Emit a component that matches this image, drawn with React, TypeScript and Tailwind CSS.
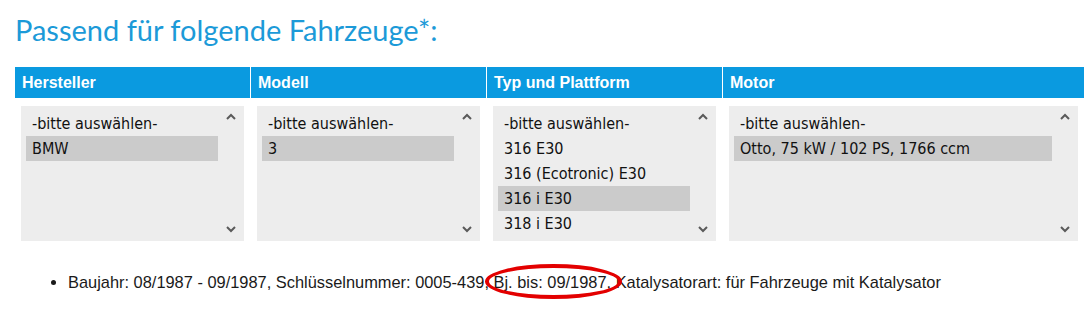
const columns = [
  {
    title: 'Hersteller',
    options: ['-bitte auswählen-', 'BMW'],
    selected: 1,
  },
  {
    title: 'Modell',
    options: ['-bitte auswählen-', '3'],
    selected: 1,
  },
  {
    title: 'Typ und Plattform',
    options: ['-bitte auswählen-', '316 E30', '316 (Ecotronic) E30', '316 i E30', '318 i E30'],
    selected: 3,
  },
  {
    title: 'Motor',
    options: ['-bitte auswählen-', 'Otto, 75 kW / 102 PS, 1766 ccm'],
    selected: 1,
  },
]

function Chevron({ up }: { up?: boolean }) {
  return (
    <svg width="10" height="7" viewBox="0 0 10 7" className="block">
      <path
        d={up ? 'M1 6 L5 2 L9 6' : 'M1 1 L5 5 L9 1'}
        fill="none"
        stroke="#5a5a5a"
        strokeWidth="2"
      />
    </svg>
  )
}

export default function App() {
  return (
    <div className="min-h-[315px] bg-white px-[15px] pt-[10px]">
      <h2 className="font-['Lato',sans-serif] text-[29px] leading-[40px] text-[#1c9ad8]">
        Passend für folgende Fahrzeuge*:
      </h2>

      <div className="mt-[17px] grid grid-cols-[235px_235px_235px_361px] gap-x-px">
        {columns.map((c) => (
          <div
            key={c.title}
            className="flex h-[31px] items-center bg-[#0a9ae0] pl-[7px] font-['Liberation_Sans',sans-serif] text-[16px] font-bold text-white"
          >
            {c.title}
          </div>
        ))}
        {columns.map((c) => (
          <div key={c.title} className="px-[6px] pt-[8px]">
            <div className="flex h-[135px] bg-[#ededed] py-[5px] pl-[5px]">
              <div className="flex-1 font-['DejaVu_Sans_Condensed','Liberation_Sans',sans-serif] text-[16px] text-[#111]">
                {c.options.map((o, i) => (
                  <div
                    key={o}
                    className={`h-[25px] pl-[6px] leading-[25px] ${i === c.selected ? 'bg-[#cbcbcb]' : ''}`}
                  >
                    {o}
                  </div>
                ))}
              </div>
              <div className="flex w-[26px] flex-col items-center justify-between pb-[3px] pt-[2px]">
                <Chevron up />
                <Chevron />
              </div>
            </div>
          </div>
        ))}
      </div>

      <ul className="mt-[31px] list-disc pl-[53px] font-['Liberation_Sans',sans-serif] text-[16.4px] leading-[20px] text-[#1a1a1a]">
        <li>
          Baujahr: 08/1987 - 09/1987, Schlüsselnummer: 0005-439,{' '}
          <span className="relative">
            Bj. bis: 09/1987,
            <span className="absolute left-[-9px] top-[-9px] h-[35px] w-[137px] rounded-[50%] border-[4px] border-[#e30000]" />
          </span>{' '}
          Katalysatorart: für Fahrzeuge mit Katalysator
        </li>
      </ul>
    </div>
  )
}
